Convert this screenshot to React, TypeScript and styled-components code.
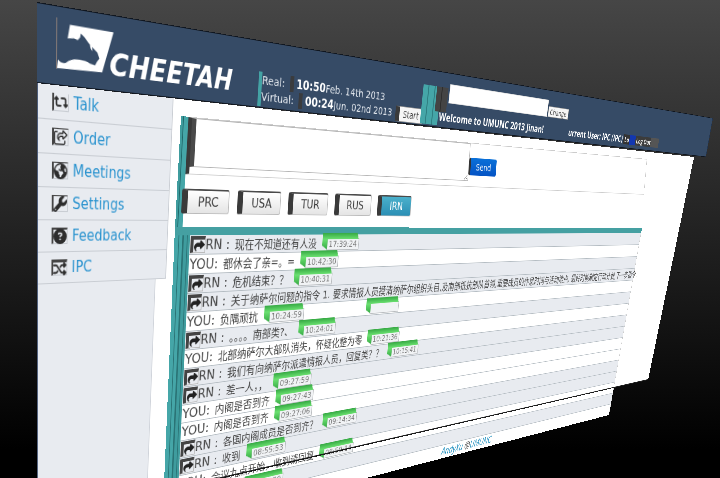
import { useEffect, useState, type ReactNode } from "react";
import styled, { createGlobalStyle, css } from "styled-components";
import {
  FaRetweet,
  FaRegShareFromSquare,
  FaEarthAmericas,
  FaWrench,
  FaCircleQuestion,
  FaShuffle,
  FaShare,
} from "react-icons/fa6";

type Point = [number, number];
type Quad = [Point, Point, Point, Point];

const SCENE_WIDTH = 720;

/* Perspective projection that carries a width x height panel onto a quad
   given clockwise from its top left corner. */
function project(width: number, height: number, quad: Quad, zoom: number) {
  const [[x0, y0], [x1, y1], [x2, y2], [x3, y3]] = quad.map(([x, y]) => [
    x * zoom,
    y * zoom,
  ]);
  const dx1 = x1 - x2;
  const dx2 = x3 - x2;
  const sx = x0 - x1 + x2 - x3;
  const dy1 = y1 - y2;
  const dy2 = y3 - y2;
  const sy = y0 - y1 + y2 - y3;
  const det = dx1 * dy2 - dx2 * dy1;
  const g = (sx * dy2 - dx2 * sy) / det;
  const h = (dx1 * sy - sx * dy1) / det;
  const m = [
    (x1 - x0 + g * x1) / width,
    (y1 - y0 + g * y1) / width,
    0,
    g / width,
    (x3 - x0 + h * x3) / height,
    (y3 - y0 + h * y3) / height,
    0,
    h / height,
    0,
    0,
    1,
    0,
    x0,
    y0,
    0,
    1,
  ];
  return `matrix3d(${m.map((n) => n.toFixed(9)).join(",")})`;
}

function useZoom() {
  const [zoom, setZoom] = useState(window.innerWidth / SCENE_WIDTH);
  useEffect(() => {
    const update = () => setZoom(window.innerWidth / SCENE_WIDTH);
    window.addEventListener("resize", update);
    return () => window.removeEventListener("resize", update);
  }, []);
  return zoom;
}

const GlobalStyle = createGlobalStyle`
  * { box-sizing: border-box; }
  body { margin: 0; background: #000; }
  button, input, textarea { font: inherit; }
`;

const sans = `"DejaVu Sans", "Noto Sans CJK SC", sans-serif`;
const humanist = `"Open Sans", "Noto Sans", sans-serif`;

const Stage = styled.div`
  display: grid;
  place-items: start;
  grid-template-columns: minmax(0, 1fr);
  height: 100vh;
  overflow: hidden;
  background: linear-gradient(#464646, #000 94%);
  font-family: ${sans};
  color: #444;
`;

const PlaneBox = styled.div<{ $w: number; $h: number; $ghost?: boolean }>`
  grid-area: 1 / 1;
  width: ${(p) => p.$w}px;
  height: ${(p) => p.$h}px;
  transform-origin: 0 0;
  pointer-events: ${(p) => (p.$ghost ? "none" : "auto")};
`;

function Plane(props: {
  w: number;
  h: number;
  quad: Quad;
  ghost?: boolean;
  children: ReactNode;
}) {
  const zoom = useZoom();
  return (
    <PlaneBox
      $w={props.w}
      $h={props.h}
      $ghost={props.ghost}
      style={{ transform: project(props.w, props.h, props.quad, zoom) }}
    >
      {props.children}
    </PlaneBox>
  );
}

/* Header */

const Header = styled.header`
  display: flex;
  align-items: flex-end;
  height: 100%;
  background: #364b66;
  border-top: 1px solid #10161f;
  border-bottom: 1px solid #10161f;
  border-right: 2px solid #24364f;
  color: #e4e9ef;
`;

const Brand = styled.a`
  display: flex;
  align-items: flex-end;
  flex: none;
  width: 254px;
  height: 52px;
  margin: 0 0 16px 20px;
  border-left: 1px solid #8a7d78;
  color: #fff;
  text-decoration: none;
`;

const BrandName = styled.span`
  font: italic bold 34px/32px "DejaVu Sans Condensed", "Liberation Sans", sans-serif;
  margin: 0 0 -4px -4px;
`;

const Clocks = styled.div`
  display: flex;
  align-items: flex-end;
  flex: none;
  width: 284px;
  height: 42px;
  margin-bottom: 1px;
  border-left: 5px solid #44a3a5;
  font-size: 14px;
`;

const ClockRows = styled.div`
  flex: none;
  width: 229px;
  padding-bottom: 2px;
  white-space: nowrap;
`;

const ClockRow = styled.div`
  display: flex;
  line-height: 20px;
`;

const ClockTime = styled.b`
  margin-left: 8px;
  padding-left: 4px;
  border-left: 6px solid #3a3b3d;
  color: #fff;
  font-size: 15px;
`;

const SmallButton = styled.button`
  flex: none;
  height: 22px;
  padding: 0 7px;
  border: 1px solid #999;
  border-left: 8px solid #3a3a3a;
  background: #f6f6f6;
  color: #333;
  font: 14px/18px ${humanist};
`;

const Pillars = styled.div`
  flex: none;
  width: 52px;
  height: 56px;
  margin-bottom: 2px;
  background:
    linear-gradient(90deg, #444 0 10px, #2e2e2e 10px 12px, #444 12px) 28px 0 / 24px 36px no-repeat,
    linear-gradient(90deg, #45a6a8 0 10px, #2f7f82 10px 12px, #45a6a8 12px 23px, #2f7f82 23px 25px, #45a6a8 25px) 0 0 / 36px 100% no-repeat;
`;

const Account = styled.div`
  display: flex;
  flex-direction: column;
  flex: none;
  height: 64px;
  margin-left: -14px;
  width: 680px;
  font: bold 16px/20px ${humanist};
  color: #fff;
`;

const NoticeForm = styled.form`
  display: flex;
  align-items: flex-end;
  padding-left: 17px;
  gap: 2px;
`;

const NoticeInput = styled.input`
  width: 238px;
  height: 28px;
  border: 1px solid #ddd;
  background: #fff;
`;

const ChangeButton = styled(SmallButton)`
  height: 18px;
  padding: 0 4px;
  border: 1px solid #999;
  font-size: 13px;
  line-height: 16px;
`;

const AccountRow = styled.div`
  display: flex;
  align-items: center;
  padding-top: 11px;
  white-space: nowrap;
`;

const Welcome = styled.span`
  flex: none;
  width: 320px;
`;

const LogOut = styled.button`
  display: flex;
  gap: 24px;
  height: 18px;
  margin-left: 2px;
  padding: 0 28px 0 4px;
  border: 0;
  background: linear-gradient(90deg, #333 0 20px, #1237b0 20px 40px, #3c3c3c 40px 94px, #555 94px);
  color: #eee;
  font: bold 13px/18px ${humanist};
`;

/* Body and sidebar */

const Body = styled.div`
  display: flex;
  height: 100%;
  background: #fff;
`;

const Sidebar = styled.aside`
  flex: none;
  width: 144px;
  background: #e8ebf0;
  border-right: 1px solid #cfd3da;
  border-left: 1px solid #4a5a78;
`;

const Nav = styled.nav`
  width: 157px;
`;

const NavLink = styled.a`
  display: flex;
  align-items: center;
  gap: 5px;
  height: 31px;
  padding-left: 15px;
  background: #e8ebf0;
  border: 1px solid #c9cdd3;
  border-width: 0 1px 1px 0;
  color: #2a93cf;
  font-size: 15px;
  text-decoration: none;
`;

const NavIcon = styled.span<{ $lid: number }>`
  display: flex;
  align-items: center;
  justify-content: center;
  width: 18px;
  height: 16px;
  border: 1px solid #c9cdd3;
  border-left: 2px solid #444;
  border-top: ${(p) => p.$lid}px solid #444;
  color: #2d2d2d;
  font-size: 15px;
`;

const Frame = styled.div`
  height: 100%;
  border-bottom: 2px solid #1b1b1b;
`;

/* Composer */

const Main = styled.main`
  height: 100%;
  border-left: 3px solid #3f9c9e;
  box-shadow: inset 1px 0 #1f6668, inset 7px 0 #45a6a8;
  padding-left: 7px;
`;

const Composer = styled.form`
  display: flex;
  height: 68px;
  border: 1px solid #ccc;
  border-left: 5px solid #3a3a3a;
`;

const Message = styled.textarea`
  width: 488px;
  height: 58px;
  border: 1px solid #b5b5b5;
  border-left: 6px solid #4a4a4a;
  background: #fff;
  resize: vertical;
`;

const Send = styled.button`
  width: 64px;
  height: 27px;
  margin-top: 22px;
  padding: 0;
  border: 0;
  border-left: 4px solid #333;
  border-radius: 3px;
  background: linear-gradient(#0a70d8, #0453c4);
  color: #fff;
  font-size: 14px;
`;

const Teams = styled.div`
  display: flex;
  gap: 12px;
  margin-left: -3px;
  padding-top: 17px;
`;

const Team = styled.button<{ $on?: boolean }>`
  width: 66px;
  height: 30px;
  padding: 0;
  border: 1px solid #bbb;
  border-left: 8px solid #3a3a3a;
  border-top: 2px solid #4a4a4a;
  border-radius: 3px;
  background: linear-gradient(#fff, #e4e4e4);
  color: #3c3c3c;
  font-size: 15px;
  ${(p) =>
    p.$on &&
    css`
      background: linear-gradient(#4ab0cb, #2b8fb5);
      color: #fff;
    `}
`;

/* Log */

const Log = styled.ol`
  height: 100%;
  margin: 0;
  padding: 0 0 0 20px;
  list-style: none;
  border-top: 9px solid #45a0a2;
  background: linear-gradient(
    90deg,
    #45a6a8 0 5px,
    #2a7375 5px 6px,
    #45a6a8 6px 10px,
    #2a7375 10px 12px,
    #3f9c9e 12px 16px,
    #2a7375 16px 17px,
    #3f9c9e 17px
  );
`;

const Entry = styled.li<{ $mine?: boolean }>`
  display: flex;
  align-items: center;
  height: 22px;
  padding-left: 1px;
  border-bottom: 1px solid #b4bcc2;
  border-right: 1px solid #ccc;
  background: ${(p) => (p.$mine ? "#fff" : "#e8ebf0")};
  font-size: 14px;
  line-height: 20px;
  white-space: pre;
`;

const Speaker = styled.span`
  margin-right: 2px;
  font-size: 16px;
`;

const Reply = styled.button`
  display: flex;
  align-items: center;
  justify-content: center;
  width: 20px;
  height: 19px;
  padding: 0;
  border: 1px solid #bbb;
  border-left: 4px solid #444;
  border-top: 4px solid #444;
  background: #e8ebf0;
  color: #222;
  font-size: 14px;
`;

const Time = styled.time<{ $apart?: boolean }>`
  position: relative;
  z-index: 1;
  flex: none;
  width: 56px;
  height: 15px;
  margin-left: ${(p) => (p.$apart ? 118 : 17)}px;
  margin-top: 4px;
  border: 1px solid #b9bcbf;
  background: #f1f3f5;
  color: #777;
  font-size: 11px;
  line-height: 13px;
  text-align: center;
  &::before {
    content: "";
    position: absolute;
    inset: -8px 0 0 -9px;
    background: linear-gradient(#35a843, #6be070 8px, #35a843);
    clip-path: polygon(0 0, 96% 0, 100% 8px, 9px 8px, 9px 100%, 0 75%);
  }
`;

const Credit = styled.li`
  height: 22px;
  padding-left: 484px;
  border-right: 1px solid #ccc;
  background: #fff;
  color: #444;
  font: italic 16px/20px ${humanist};
`;

const CreditLink = styled.a`
  color: #1e8fbf;
  text-decoration: none;
`;

const links = [
  { label: "Talk", icon: <FaRetweet />, lid: 0 },
  { label: "Order", icon: <FaRegShareFromSquare />, lid: 1 },
  { label: "Meetings", icon: <FaEarthAmericas />, lid: 1 },
  { label: "Settings", icon: <FaWrench />, lid: 1 },
  { label: "Feedback", icon: <FaCircleQuestion />, lid: 2 },
  { label: "IPC", icon: <FaShuffle />, lid: 3 },
];

const entries: { text: string; time?: string; mine?: boolean; blank?: boolean }[] = [
  { text: "现在不知道还有人没", time: "17:39:24" },
  { text: "都休会了亲=。=", time: "10:42:30", mine: true },
  { text: "危机结束？？", time: "10:40:31" },
  {
    text: "关于纳萨尔问题的指令 1. 要求情报人员摸清纳萨尔组织头目,及南部抵抗部队首领,重要成员的作息时间与活动地点. 最好时能制定行动计划,下一步指令.",
  },
  { text: "负隅顽抗", time: "10:24:59", mine: true, blank: true },
  { text: "。。。。南部类?、", time: "10:24:01" },
  { text: "北部纳萨尔大部队消失，怀疑化整为零", time: "10:21:36", mine: true },
  { text: "我们有向纳萨尔派遣情报人员，回复类？？", time: "10:15:41" },
  { text: "差一人，，", time: "09:27:59" },
  { text: "内阁是否到齐", time: "09:27:43", mine: true },
  { text: "内阁是否到齐", time: "09:27:06", mine: true },
  { text: "各国内阁成员是否到齐？", time: "09:14:34" },
  { text: "收到", time: "08:55:53" },
  { text: "会议九点开始，收到请回复", time: "08:50:14", mine: true },
  { text: "收到", time: "08:49:20" },
];

const bodyQuad: Quad = [[37, 83], [694, 157], [648, 380], [37, 521]];

export default function App() {
  return (
    <>
      <GlobalStyle />
      <Stage>
        <Plane w={1400} h={438} quad={bodyQuad}>
          <Body>
            <Sidebar>
              <Nav>
                {links.map((link) => (
                  <NavLink href="#" key={link.label}>
                    <NavIcon $lid={link.lid}>{link.icon}</NavIcon>
                    {link.label}
                  </NavLink>
                ))}
              </Nav>
            </Sidebar>
          </Body>
        </Plane>

        <Plane w={1400} h={81} quad={[[37, 2], [713, 118], [706, 157], [37, 83]]}>
          <Header>
            <Brand href="#">
              <svg width="62" height="47" viewBox="85 59 183 137" aria-hidden="true">
                <path
                  fill="#fff"
                  d="M125 59 268 61 232 191 85 195 88 168Q96 180 112 176 132 160 152 161 176 160 190 168L208 172 214 160 222 149 215 131 200 119 186 106 172 90 160 80 158 92 150 102 138 98 118 101Z"
                />
                <path fill="#fff" d="M190 106q10 4 8 23-8-8-8-23z" />
              </svg>
              <BrandName>CHEETAH</BrandName>
            </Brand>
            <Clocks>
              <ClockRows>
                <ClockRow>
                  Real: <ClockTime>10:50</ClockTime>Feb. 14th 2013
                </ClockRow>
                <ClockRow>
                  Virtual: <ClockTime>00:24</ClockTime>Jun. 02nd 2013
                </ClockRow>
              </ClockRows>
              <SmallButton type="button">Start</SmallButton>
            </Clocks>
            <Pillars />
            <Account>
              <NoticeForm>
                <NoticeInput aria-label="Notice" />
                <ChangeButton type="button">Change</ChangeButton>
              </NoticeForm>
              <AccountRow>
                <Welcome>Welcome to UMUNC 2013 Jinan!</Welcome>
                <span>urrent User: IPC (IPC)</span>
                <LogOut type="button">
                  <span>Lo</span>
                  <span>Log Out</span>
                </LogOut>
              </AccountRow>
            </Account>
          </Header>
        </Plane>

        <Plane w={1000} h={132} quad={[[181, 116], [647, 159], [641, 228], [175, 228]]}>
          <Main>
            <Composer>
              <Message aria-label="Message" />
              <Send type="button">Send</Send>
            </Composer>
            <Teams>
              {["PRC", "USA", "TUR", "RUS", "IRN"].map((name) => (
                <Team type="button" key={name} $on={name === "IRN"}>
                  {name}
                </Team>
              ))}
            </Teams>
          </Main>
        </Plane>

        <Plane w={1000} h={361} quad={[[175, 227], [642, 228], [609, 415], [162, 531]]}>
          <Log>
            {entries.map((entry, i) => (
              <Entry key={i} $mine={entry.mine}>
                {!entry.mine && (
                  <Reply type="button" aria-label="Reply">
                    <FaShare />
                  </Reply>
                )}
                <Speaker>{entry.mine ? "YOU: " : "RN : "}</Speaker>
                {entry.text}
                {entry.time && <Time>{entry.time}</Time>}
                {entry.blank && <Time $apart />}
              </Entry>
            ))}
            <Credit>
              <CreditLink href="#">AndyXu</CreditLink> @<CreditLink href="#">UMUNC</CreditLink>
            </Credit>
          </Log>
        </Plane>

        <Plane w={1400} h={438} quad={bodyQuad} ghost>
          <Frame />
        </Plane>
      </Stage>
    </>
  );
}
